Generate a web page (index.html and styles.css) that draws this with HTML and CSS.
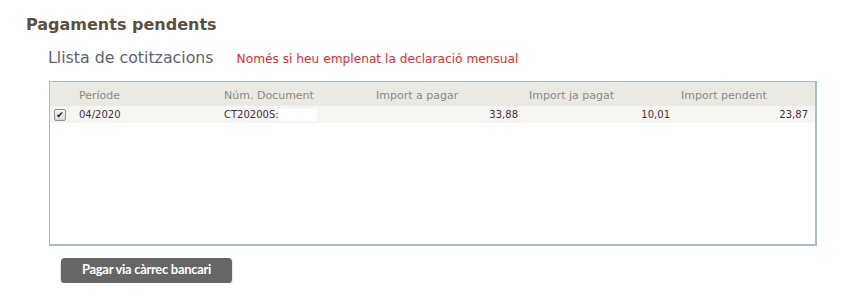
FILE: index.html
```html
<!DOCTYPE html>
<html lang="ca">
<head>
    <meta charset="UTF-8">
    <title>Pagaments pendents</title>
    <link rel="stylesheet" href="styles.css">
</head>
<body>
    <div class="page">
        <h2 class="title">Pagaments pendents</h2>
        <div class="subhead">
            <span class="subtitle">Llista de cotitzacions</span>
            <span class="notice">Només si heu emplenat la declaració mensual</span>
        </div>
        <div class="grid-box">
            <table class="grid">
                <colgroup>
                    <col class="c-check">
                    <col class="c-period">
                    <col class="c-doc">
                    <col class="c-amount">
                    <col class="c-paid">
                    <col class="c-last">
                </colgroup>
                <thead>
                    <tr>
                        <th></th>
                        <th>Període</th>
                        <th>Núm. Document</th>
                        <th>Import a pagar</th>
                        <th>Import ja pagat</th>
                        <th>Import pendent</th>
                    </tr>
                </thead>
                <tbody>
                    <tr>
                        <td><span class="check">&#10004;</span></td>
                        <td>04/2020</td>
                        <td>CT20200S:<span class="hidden-part"></span></td>
                        <td class="num">33,88</td>
                        <td class="num">10,01</td>
                        <td class="num">23,87</td>
                    </tr>
                </tbody>
            </table>
        </div>
        <button class="pay-btn">Pagar via càrrec bancari</button>
    </div>
</body>
</html>
```

FILE: styles.css
```css
body {
    margin: 0;
    background: #fff;
    font-family: "DejaVu Sans", Verdana, sans-serif;
}

.page {
    padding: 15px 0 0 26px;
}

.title {
    margin: 0;
    font-size: 16px;
    font-weight: bold;
    color: #5a5142;
    line-height: 20px;
}

.subhead {
    display: flex;
    align-items: baseline;
    gap: 23px;
    margin: 13px 0 0 22px;
    line-height: 20px;
}

.subtitle {
    font-size: 15.8px;
    color: #5d6470;
}

.notice {
    font-size: 12.2px;
    color: #f2262b;
}

.grid-box {
    margin: 12px 0 0 23px;
    width: 765px;
    height: 162px;
    border: 1px solid #a9bccd;
    border-right-width: 2px;
    border-bottom-width: 2px;
}

.grid {
    width: 100%;
    border-collapse: collapse;
    table-layout: fixed;
    font-size: 10px;
}

.c-check { width: 25px; }
.c-period { width: 145px; }
.c-doc { width: 152px; }
.c-amount { width: 153px; }
.c-paid { width: 152px; }

.grid th {
    background: #ebeae2;
    color: #8a8a8a;
    font-weight: normal;
    text-align: left;
    height: 21px;
    padding: 3px 4px 0;
    font-size: 11px;
}

.grid td {
    background: #f5f5f1;
    color: #3f3242;
    height: 17px;
    padding: 0 4px;
}

.grid td.num {
    text-align: right;
    padding-right: 7px;
}

.check {
    display: inline-block;
    width: 10px;
    height: 10px;
    border: 1px solid #8f8f8f;
    border-radius: 2px;
    background: linear-gradient(#f4f4f4, #d8d8d8);
    color: #111;
    font-size: 9px;
    line-height: 10px;
    text-align: center;
    vertical-align: middle;
}

.hidden-part {
    display: inline-block;
    width: 38px;
    height: 12px;
    background: #fff;
    vertical-align: middle;
}

.pay-btn {
    display: block;
    margin: 12px 0 0 35px;
    width: 171px;
    height: 25px;
    border: none;
    border-radius: 4px;
    background: #666;
    box-shadow: 0 1px 2px rgba(0,0,0,0.35);
    color: #fff;
    font-family: Lato, sans-serif;
    font-weight: bold;
    font-size: 13px;
    letter-spacing: -0.3px;
    padding: 0 0 3px;
}
```
